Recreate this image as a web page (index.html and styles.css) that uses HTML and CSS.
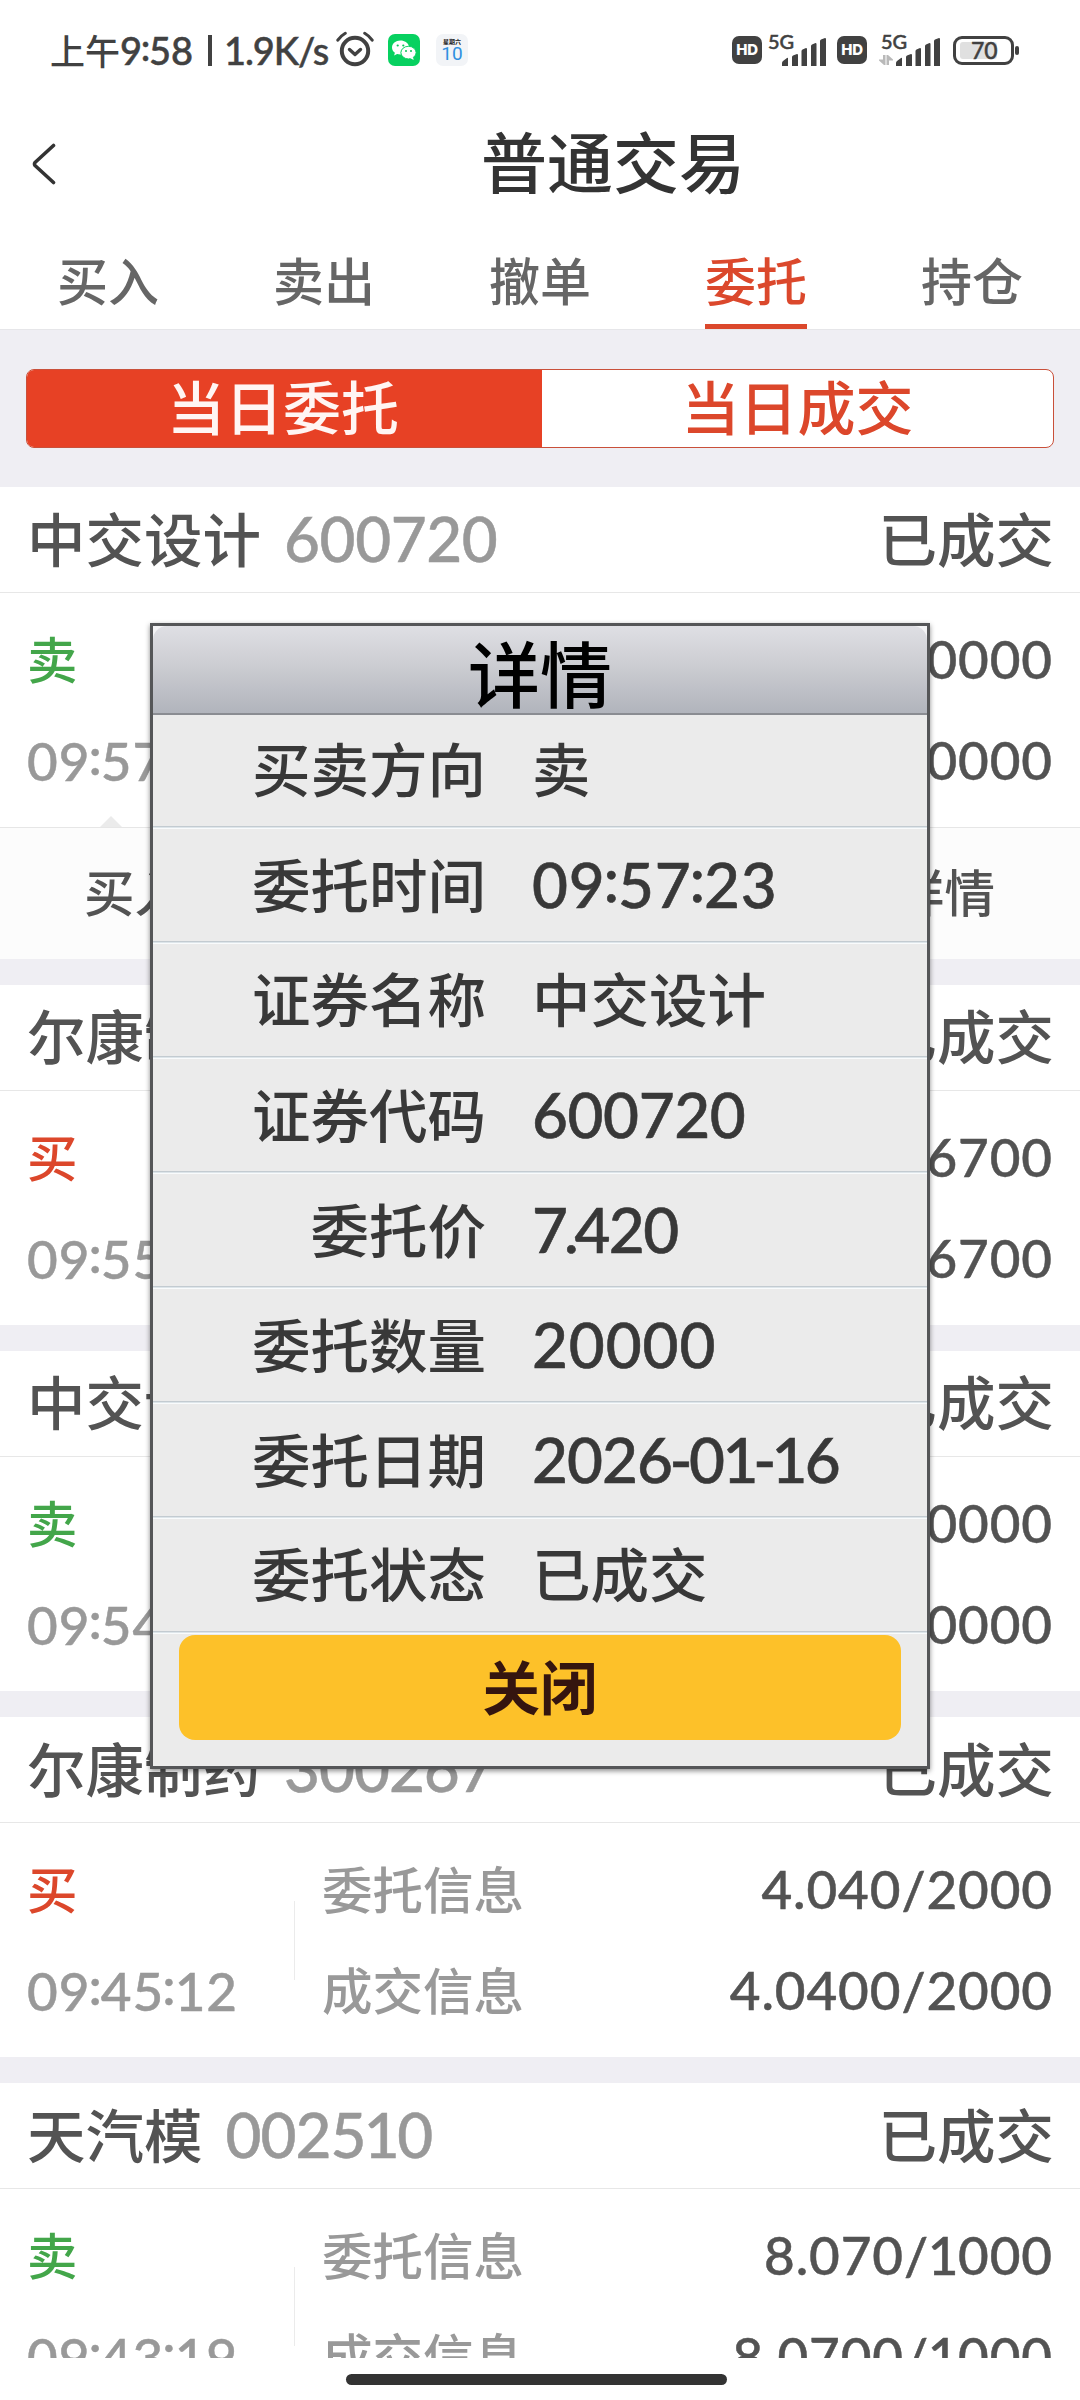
FILE: index.html
```html
<!DOCTYPE html>
<html lang="zh-CN">
<head>
<meta charset="utf-8">
<title>普通交易</title>
<link rel="stylesheet" href="styles.css">
</head>
<body>
<svg class="defs" width="0" height="0">
  <symbol id="bars" viewBox="0 0 44 28">
    <path d="M0 28v-3q0-1 1-2l4-3q1-.5 1 .5V28zM10 28V19q0-1 1-1.500l4-1.500q1 0 1 1V28zM19.500 28V13q0-1 1-1.500l3.500-1.500q1 0 1 1V28zM29 28V8q0-1 1-1.500l3.500-1.500q1 0 1 1V28zM38 28V3q0-1 1-1.500L43 0q1 0 1 1V28z"/>
  </symbol>
</svg>
<div class="screen">
  <header class="status">
    <div class="status-left">
      <span class="clock">上午<b>9<i>:</i>58</b></span><span class="pipe"></span><span class="speed">1.9K/s</span>
      <svg class="alarm" viewBox="0 0 38 36" width="38" height="36" fill="none" stroke="#414141" stroke-linecap="round">
        <circle cx="19" cy="20" r="13.200" stroke-width="4"/>
        <path d="M13.500 18.500l5.500 5 5.500-5" stroke-width="3.400" stroke-linejoin="round"/>
        <path d="M1.800 9.200q3-4.500 7.500-7M36.200 9.200q-3-4.500-7.500-7" stroke-width="3"/>
      </svg>
      <svg class="wechat" viewBox="0 0 32 32" width="32" height="32">
        <rect width="32" height="32" rx="7" fill="#07d160"/>
        <path fill="#fff" d="M12.500 6.500c-4.900 0-8.500 3.100-8.500 7 0 2.200 1.100 4 2.900 5.300l-.8 2.700 3-1.500c1 .3 2.200.4 3.300.4h.6c-1.200-4.600 2.700-8.400 7.900-8.200-.8-3.400-4.300-5.700-8.400-5.700z"/>
        <ellipse cx="20.500" cy="18.600" rx="7.600" ry="6.300" fill="#fff" stroke="#07d160" stroke-width=".9"/>
        <path fill="#fff" d="M22 24l3.700 2-.8-3z"/>
        <g fill="#07c458"><circle cx="9.700" cy="11.500" r="1.100"/><circle cx="15.300" cy="11.500" r="1.100"/><circle cx="18" cy="17" r="1"/><circle cx="23" cy="17" r="1"/></g>
      </svg>
      <div class="calendar"><b>星期六</b><span>10</span></div>
    </div>
    <div class="status-right">
      <span class="hd">HD</span>
      <div class="signal"><span>5G</span><svg width="44" height="28"><use href="#bars"/></svg></div>
      <span class="hd hd-second">HD</span>
      <div class="signal signal-data"><span>5G</span>
        <svg class="arrows" viewBox="0 0 14 10" width="14" height="10" fill="#b9b9b9"><path d="M4 0h2.500v10H5L0 5.500V4.500h4zM7.500 0H9l5 4.500v1h-4V10H7.500z"/></svg>
        <svg width="44" height="28"><use href="#bars"/></svg></div>
      <div class="battery"><span>70</span></div>
    </div>
  </header>

  <div class="titlebar">
    <svg class="back" viewBox="0 0 24 42" width="24" height="42" fill="none" stroke="#333" stroke-width="3.600" stroke-linecap="round" stroke-linejoin="round"><path d="M21.500 2.500L3 19.500q-1 1.500 0 3l18.500 17"/></svg>
    <h1>普通交易</h1>
  </div>

  <nav class="tabs">
    <a>买入</a><a>卖出</a><a>撤单</a><a class="active">委托</a><a>持仓</a>
  </nav>

  <div class="segment-wrap">
    <div class="segment"><span class="on">当日委托</span><span>当日成交</span></div>
  </div>

  <main class="orders">
    <section class="order">
      <div class="order-head"><span>中交设计</span><em>600720</em><strong>已成交</strong></div>
      <div class="order-body">
        <div class="side"><span class="sell">卖</span><time>09<i>:</i>57</time></div>
        <div class="info"><p><b>0000</b></p><p><b>0000</b></p></div>
      </div>
      <div class="actions"><a>买入</a><a>详情</a></div>
    </section>
    <section class="order">
      <div class="order-head"><span>尔康制</span><strong>已成交</strong></div>
      <div class="order-body">
        <div class="side"><span class="buy">买</span><time>09<i>:</i>55</time></div>
        <div class="info"><p><b>6700</b></p><p><b>6700</b></p></div>
      </div>
    </section>
    <section class="order">
      <div class="order-head"><span>中交设</span><strong>已成交</strong></div>
      <div class="order-body">
        <div class="side"><span class="sell">卖</span><time>09<i>:</i>54</time></div>
        <div class="info"><p><b>0000</b></p><p><b>0000</b></p></div>
      </div>
    </section>
    <section class="order">
      <div class="order-head"><span>尔康制药</span><em class="tight">300267</em><strong>已成交</strong></div>
      <div class="order-body">
        <div class="side"><span class="buy">买</span><time>09<i>:</i>45<i>:</i>12</time></div>
        <div class="rule"></div>
        <div class="info"><p><span>委托信息</span><b>4.040/2000</b></p><p><span>成交信息</span><b>4.0400/2000</b></p></div>
      </div>
    </section>
    <section class="order">
      <div class="order-head"><span>天汽模</span><em class="tight">0025<u>1</u>0</em><strong>已成交</strong></div>
      <div class="order-body">
        <div class="side"><span class="sell">卖</span><time>09<i>:</i>43<i>:</i>19</time></div>
        <div class="rule"></div>
        <div class="info"><p><span>委托信息</span><b>8.070/<u>1</u>000</b></p><p><span>成交信息</span><b>8.0700/<u>1</u>000</b></p></div>
      </div>
    </section>
  </main>
  <footer class="home"><span></span></footer>

  <div class="dialog">
    <div class="dialog-title"><h2>详情</h2></div>
    <dl>
      <div><dt>买卖方向</dt><dd>卖</dd></div>
      <div><dt>委托时间</dt><dd class="num">09<i>:</i>57<i>:</i>23</dd></div>
      <div><dt>证券名称</dt><dd>中交设计</dd></div>
      <div><dt>证券代码</dt><dd class="num code">600720</dd></div>
      <div><dt>委托价</dt><dd class="num price">7<s>.</s>420</dd></div>
      <div><dt>委托数量</dt><dd class="num">20000</dd></div>
      <div><dt>委托日期</dt><dd class="num date">2026<s>-</s>0<u>1</u><s>-</s><u>1</u>6</dd></div>
      <div><dt>委托状态</dt><dd>已成交</dd></div>
    </dl>
    <button class="close">关闭</button>
  </div>
</div>
</body>
</html>
```
FILE: styles.css
```css
* { box-sizing: border-box; margin: 0; padding: 0; }
body {
  width: 1080px;
  background: #fff;
  color: #535353;
  font-family: Lato, "Noto Sans CJK SC", sans-serif;
  font-weight: 500;
}
.defs { position: absolute; }
.screen {
  position: relative;
  display: flex;
  flex-direction: column;
  width: 1080px;
  height: 2400px;
  overflow: hidden;
}
i, em, u, s { font-style: normal; text-decoration: none; }
i { position: relative; top: -.1em; margin: 0 -.035em; }
u { margin: 0 -.025em; }
s { margin: 0 -.04em; }

/* status bar */
.status {
  display: flex;
  justify-content: space-between;
  height: 96px;
  padding: 0 66px 0 50px;
  color: #414141;
}
.status-left, .status-right { display: flex; align-items: center; height: 100px; }
.clock, .speed { font-size: 35px; line-height: 40px; white-space: nowrap; }
.clock { width: 145px; }
.clock b, .speed { font-size: 38px; font-weight: 500; -webkit-text-stroke: .5px; }
.pipe { width: 4px; height: 31px; margin: 0 12px 0 13px; background: #414141; }
.speed { width: 112px; letter-spacing: -1.100px; }
.alarm { margin-top: -2px; }
.wechat { margin-left: 14px; }
.calendar {
  display: flex;
  flex-direction: column;
  align-items: center;
  width: 32px;
  height: 32px;
  margin-left: 16px;
  padding-top: 4px;
  border-radius: 7px;
  background: #f2f4f7;
}
.calendar b { font-size: 6px; line-height: 7px; color: #222; }
.calendar span { font: 400 19px/17px Roboto, sans-serif; color: #2f8fe0; }
.hd {
  width: 30px;
  height: 28px;
  border-radius: 7px;
  background: #414141;
  color: #fff;
  font: 800 15px/28px Inter, sans-serif;
  text-align: center;
  letter-spacing: -.3px;
}
.hd-second { margin-left: 11px; }
.signal {
  display: flex;
  align-items: flex-end;
  height: 32px;
  margin-left: 6px;
  fill: #414141;
}
.signal span {
  align-self: flex-start;
  width: 25px;
  margin-right: -11px;
  font-size: 20px;
  line-height: 15px;
  -webkit-text-stroke: .5px;
}
.signal-data { margin-left: 11px; }
.signal-data span { margin: 0 -27px 0 3px; }
.signal-data .arrows { margin: 0 3px 1px 0; }
.battery {
  position: relative;
  width: 61px;
  height: 29px;
  margin: 0 0 0 13px;
  padding: 3px 4px;
  border: 3px solid #414141;
  border-radius: 9px;
}
.battery::after {
  content: "";
  position: absolute;
  right: -8px;
  top: 7px;
  width: 4px;
  height: 9px;
  border-radius: 2px;
  background: #414141;
}
.battery span {
  display: block;
  width: 37px;
  height: 17px;
  padding-left: 11px;
  border-radius: 3px;
  background: #e0e0e0;
  font-size: 23px;
  line-height: 17px;
  -webkit-text-stroke: .4px;
}

/* title and tabs */
.titlebar { display: flex; align-items: center; height: 136px; padding-left: 32px; }
h1 {
  flex: 1;
  margin: -2px 0 0 90px;
  color: #333;
  font-size: 66px;
  font-weight: 500;
  line-height: 80px;
  text-align: center;
}
.tabs { display: grid; grid-template-columns: repeat(5, 1fr); justify-items: center; height: 97px; }
.tabs a { height: 97px; font-size: 51px; line-height: 99px; color: #666; }
.tabs .active { color: #db482c; border-bottom: 5px solid #db482c; }
.segment-wrap {
  height: 158px;
  padding: 39px 26px 0;
  border-top: 1px solid #e6e6e9;
  background: #efeef3;
}
.segment {
  display: grid;
  grid-template-columns: 515px 1fr;
  height: 79px;
  overflow: hidden;
  border: 1px solid #c9503a;
  border-radius: 8px;
  background: #fff;
  color: #dc472b;
  font-size: 58px;
  line-height: 76px;
  text-align: center;
}
.segment .on { padding-right: 3px; background: #e74125; color: #fff5f3; }

/* order list */
.orders {
  display: flex;
  flex-direction: column;
  gap: 26px;
  height: 1871px;
  overflow: hidden;
  background: #efeef3;
}
.order { flex: none; background: #fff; }
.order-head {
  display: flex;
  align-items: baseline;
  height: 106px;
  padding: 0 26px 0 27px;
  border-bottom: 1px solid #e7e7e7;
  font-size: 58.500px;
  line-height: 102px;
}
.order-head em { margin-left: 23px; color: #999; font-size: 62px; letter-spacing: -.4px; -webkit-text-stroke: .5px; }
.order-head .tight { letter-spacing: -1px; }
.order-head strong { margin-left: auto; font-weight: 500; }
.order-body { display: flex; align-items: center; height: 234px; font-size: 50.500px; line-height: 100px; }
.side { display: flex; flex-direction: column; width: 294px; padding-left: 27px; }
.side span { height: 101px; }
.side time { color: #999; font-size: 53px; letter-spacing: .9px; -webkit-text-stroke: .5px; }
.buy { color: #dc472b; }
.sell { color: #43a64a; }
.rule { width: 1px; height: 79px; background: #ebebeb; }
.info { flex: 1; padding: 0 27px 0 27px; }
.info p { display: flex; align-items: baseline; height: 101px; }
.info span { color: #999; }
.info b { margin-left: auto; font-size: 53px; font-weight: 500; letter-spacing: .9px; -webkit-text-stroke: .5px; }
.actions {
  position: relative;
  display: flex;
  justify-content: space-between;
  height: 132px;
  padding: 0 85px 0 84px;
  border-top: 1px solid #e6e6e6;
  background: #fcfcfc;
  font-size: 50.500px;
  line-height: 129px;
}
.actions::before {
  content: "";
  position: absolute;
  left: 100px;
  top: -12px;
  border: solid transparent;
  border-width: 0 11px 11px;
  border-bottom-color: #ebebeb;
}
.home { display: flex; justify-content: center; height: 42px; padding: 16px 7px 0 0; background: #fff; }
.home span { width: 381px; height: 11px; border-radius: 6px; background: #333; }

/* detail dialog */
.dialog {
  position: absolute;
  left: 150px;
  top: 623px;
  width: 780px;
  height: 1146px;
  border: 3px solid #555658;
  background: #ebebeb;
  box-shadow: 0 2px 5px rgba(0, 0, 0, .45);
  color: #383838;
}
.dialog-title { height: 89px; margin-bottom: -1px; background: #f3f3f5; }
h2 {
  height: 89px;
  border-bottom: 2px solid #8a8c92;
  border-radius: 14px 14px 0 0;
  background: linear-gradient(#dfdfe4, #cccdd2 45%, #b1b4bc);
  color: #000;
  font-size: 72px;
  font-weight: 500;
  line-height: 97px;
  text-align: center;
}
dl > div {
  display: flex;
  align-items: baseline;
  height: 115px;
  border-bottom: 1px solid #f9fbfc;
  box-shadow: inset 0 -1px #dde5ea, inset 0 -2px #c3cbd1;
  font-size: 58.500px;
  line-height: 111px;
}
dl > div:first-child { box-shadow: inset 0 -1px #dde5ea, inset 0 -2px #c3cbd1, inset 0 1px #8a8c92; }
dt { width: 333px; margin-right: 46px; text-align: right; white-space: nowrap; }
dd.num { font-size: 62px; letter-spacing: .9px; -webkit-text-stroke: .6px; }
dd.code { letter-spacing: -.4px; }
dd.price { letter-spacing: -1.600px; }
dd.date { letter-spacing: -1px; }
.close {
  display: block;
  width: 722px;
  height: 105px;
  margin: 1px auto 0;
  border: 0;
  border-radius: 16px;
  background: #fdc129;
  color: #35150f;
  font: 700 57.500px/103px Lato, "Noto Sans CJK SC", sans-serif;
}
```
